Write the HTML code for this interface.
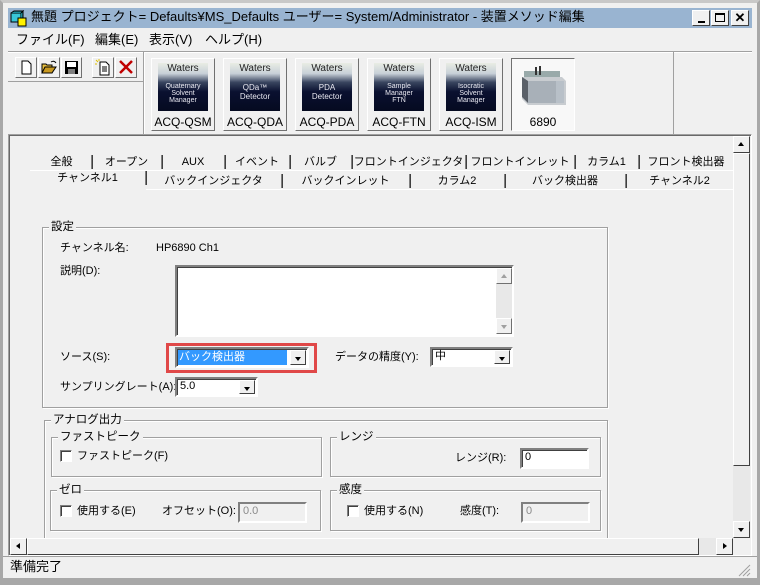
<!DOCTYPE html>
<html><head><meta charset="utf-8"><style>
*{box-sizing:border-box;margin:0;padding:0}
body{width:760px;height:585px;position:relative;overflow:hidden;background:#f0f0f0;font-family:"Liberation Sans","Noto Sans CJK JP",sans-serif;font-size:11px;color:#000}
.a{position:absolute}
.t{position:absolute;white-space:nowrap;line-height:14px}
.frame{left:0;top:0;width:760px;height:585px;border:3px solid #a8a8a8;border-top-color:#c8c8c8}
.raised{background:#f0f0f0;border:1px solid;border-color:#fff #707070 #707070 #fff}
.grp{position:absolute;border:1px solid #a0a0a0;box-shadow:1px 1px 0 #fff inset,1px 1px 0 #fff}
.gl{position:absolute;top:-8px;left:6px;background:#f0f0f0;padding:0 2px;white-space:nowrap;line-height:14px;font-size:11.5px}
.inp{position:absolute;background:#fff;border:2px solid;border-color:#808080 #fff #fff #808080;box-shadow:1px 1px 0 #404040 inset;line-height:15px;padding-left:3px}
.dis{background:#f0f0f0;color:#8a8a8a}
.dd{position:absolute;right:1px;top:1px;width:16px;bottom:1px;background:#f0f0f0;border:1px solid;border-color:#fff #404040 #404040 #fff}
.dd:after{content:"";position:absolute;left:4px;top:6px;border:3.5px solid transparent;border-top:4px solid #000}
.cb{position:absolute;width:12px;height:12px;background:#fff;border:1px solid;border-color:#808080 #fff #fff #808080;box-shadow:1px 1px 0 #404040 inset}
.dev{position:absolute;top:58px;width:64px;height:73px;border:1px solid;border-color:#fff #707070 #707070 #fff;text-align:center}
.logo{position:absolute;left:6px;top:4px;width:50px;height:48px;background:linear-gradient(#e8ece4 0,#c8d0d8 22%,#3a4660 40%,#0a1030 60%,#050a20 100%);color:#e8e8f0;font-size:7px;line-height:7px}
.logo b{display:block;color:#222;font-size:10px;font-weight:normal;padding-top:2px;height:20px}
.dl{position:absolute;left:0;right:0;top:56px;font-size:12px}
.tab{position:absolute;text-align:center;border-right:1px solid #808080;line-height:14px;box-shadow:1px 0 0 #404040;white-space:nowrap;overflow:hidden}
</style></head><body>
<div class="a frame"></div>
<div class="a" style="left:8px;top:8px;width:744px;height:20px;background:#99b4d1"></div>
<svg class="a" style="left:10px;top:10px" width="18" height="17"><rect x="1" y="3" width="10" height="9" fill="#39c6d6" stroke="#000"/><path d="M1 3l3-2h9l-2 2M11 3l2-2v9l-2 2" fill="#1c8a98" stroke="#000"/><rect x="8" y="8" width="8" height="8" fill="#fff200" stroke="#000"/></svg>
<div class="t" style="left:31px;top:10px;font-size:13px">無題 プロジェクト= Defaults¥MS_Defaults ユーザー= System/Administrator - 装置メソッド編集</div>
<div class="a raised" style="left:692px;top:10px;width:18px;height:16px;border-color:#fff #404040 #404040 #fff"><div class="a" style="left:5px;top:10px;width:7px;height:2px;background:#000"></div></div>
<div class="a raised" style="left:711px;top:10px;width:18px;height:16px;border-color:#fff #404040 #404040 #fff"><div class="a" style="left:3px;top:2px;width:10px;height:9px;border:1px solid #000;border-top-width:2px"></div></div>
<div class="a raised" style="left:731px;top:10px;width:18px;height:16px;border-color:#fff #404040 #404040 #fff;font-weight:bold;font-size:13px;text-align:center;line-height:14px">✕</div>
<div class="t" style="left:16px;top:33px;font-size:13px">ファイル(F)</div>
<div class="t" style="left:95px;top:33px;font-size:13px">編集(E)</div>
<div class="t" style="left:149px;top:33px;font-size:13px">表示(V)</div>
<div class="t" style="left:205px;top:33px;font-size:13px">ヘルプ(H)</div>
<div class="a" style="left:8px;top:51px;width:744px;height:1px;background:#a0a0a0"></div>
<div class="a" style="left:8px;top:52px;width:744px;height:1px;background:#fff"></div>
<div class="a raised" style="left:15px;top:57px;width:22px;height:21px"><svg width="20" height="19"><path d="M6 3h6l3 3v10H6z" fill="#fff" stroke="#000"/></svg></div>
<div class="a raised" style="left:38px;top:57px;width:22px;height:21px"><svg width="20" height="19"><path d="M3 6h4l1 1h5v8H3z" fill="#e8c040" stroke="#000"/><path d="M3 15l3-6h11l-4 6z" fill="#c89820" stroke="#000"/><path d="M12 4q3-2 5 1" stroke="#000" fill="none"/></svg></div>
<div class="a raised" style="left:61px;top:57px;width:21px;height:21px"><svg width="19" height="19"><rect x="3" y="3" width="13" height="13" fill="#000"/><rect x="5" y="4" width="9" height="5" fill="#fff"/><rect x="6" y="11" width="7" height="5" fill="#808080"/></svg></div>
<div class="a raised" style="left:92px;top:57px;width:22px;height:21px"><svg width="20" height="19"><path d="M7 4h6l3 3v10H7z" fill="#fff" stroke="#000"/><path d="M9 9h5M9 11h5M9 13h5" stroke="#000"/><path d="M3 2l2 2M6 1v2M2 6h2" stroke="#e0c000"/></svg></div>
<div class="a raised" style="left:115px;top:57px;width:22px;height:21px"><svg width="20" height="19"><path d="M4 3l12 12M16 3L4 15" stroke="#c00000" stroke-width="2.5"/></svg></div>
<div class="a" style="left:8px;top:81px;width:135px;height:1px;background:#a0a0a0"></div>
<div class="a" style="left:143px;top:52px;width:1px;height:82px;background:#a0a0a0"></div>
<div class="a" style="left:144px;top:52px;width:1px;height:82px;background:#fff"></div>
<div class="a" style="left:673px;top:52px;width:1px;height:82px;background:#a0a0a0"></div>
<div class="dev" style="left:151px"><div class="logo"><b>Waters</b>Quaternary<br>Solvent<br>Manager</div><div class="dl">ACQ-QSM</div></div>
<div class="dev" style="left:223px"><div class="logo"><b>Waters</b><span style="font-size:8px;line-height:9px">QDa™<br>Detector</span></div><div class="dl">ACQ-QDA</div></div>
<div class="dev" style="left:295px"><div class="logo"><b>Waters</b><span style="font-size:8px;line-height:9px">PDA<br>Detector</span></div><div class="dl">ACQ-PDA</div></div>
<div class="dev" style="left:367px"><div class="logo"><b>Waters</b>Sample<br>Manager<br>FTN</div><div class="dl">ACQ-FTN</div></div>
<div class="dev" style="left:439px"><div class="logo"><b>Waters</b>Isocratic<br>Solvent<br>Manager</div><div class="dl">ACQ-ISM</div></div>
<div class="dev" style="left:511px;border-color:#707070 #fff #fff #707070;background:#f8f8f8"><svg class="a" style="left:6px;top:4px" width="52" height="48"><path d="M6 8h36v6H6z" fill="#9aa"/><path d="M4 14h40l4 4v24H10l-6-6z" fill="#c8ccd0"/><path d="M10 18h28v22H10z" fill="#a8b0b8"/><path d="M4 14l6 4v22l-6-6z" fill="#5a6068"/><path d="M38 18h8v22h-8z" fill="#b8c0c8"/><path d="M18 4v8M22 3v9" stroke="#333" stroke-width="2"/></svg><div class="dl">6890</div></div>
<div class="a" style="left:8px;top:134px;width:744px;height:422px;border:1px solid;border-color:#a0a0a0 #fff #fff #a0a0a0;box-shadow:1px 1px 0 #696969 inset"></div>
<div class="a" style="left:733px;top:136px;width:17px;height:402px;background:#e8e8e8"></div>
<div class="a raised" style="left:733px;top:136px;width:17px;height:17px;border-color:#fff #404040 #404040 #fff"><div class="a" style="left:4px;top:5px;border:3.5px solid transparent;border-bottom:4px solid #000;border-top:0"></div></div>
<div class="a raised" style="left:733px;top:153px;width:17px;height:313px;border-color:#fff #404040 #404040 #fff"></div>
<div class="a raised" style="left:733px;top:521px;width:17px;height:17px;border-color:#fff #404040 #404040 #fff"><div class="a" style="left:4px;top:6px;border:3.5px solid transparent;border-top:4px solid #000;border-bottom:0"></div></div>
<div class="a" style="left:10px;top:538px;width:723px;height:17px;background:#e8e8e8"></div>
<div class="a raised" style="left:10px;top:538px;width:17px;height:17px;border-color:#fff #404040 #404040 #fff"><div class="a" style="left:5px;top:4px;border:3.5px solid transparent;border-right:4px solid #000;border-left:0"></div></div>
<div class="a raised" style="left:27px;top:538px;width:672px;height:17px;border-color:#fff #404040 #404040 #fff"></div>
<div class="a raised" style="left:716px;top:538px;width:17px;height:17px;border-color:#fff #404040 #404040 #fff"><div class="a" style="left:6px;top:4px;border:3.5px solid transparent;border-left:4px solid #000;border-right:0"></div></div>
<div class="a" style="left:30px;top:170px;width:703px;height:1px;background:#fff"></div>
<div class="a" style="left:30px;top:189px;width:703px;height:1px;background:#fff"></div>
<div class="tab" style="left:32px;top:155px;width:60px">全般</div>
<div class="tab" style="left:92px;top:155px;width:70px">オープン</div>
<div class="tab" style="left:162px;top:155px;width:63px">AUX</div>
<div class="tab" style="left:225px;top:155px;width:65px">イベント</div>
<div class="tab" style="left:290px;top:155px;width:62px">バルブ</div>
<div class="tab" style="left:352px;top:155px;width:114px">フロントインジェクタ</div>
<div class="tab" style="left:466px;top:155px;width:109px">フロントインレット</div>
<div class="tab" style="left:575px;top:155px;width:64px">カラム1</div>
<div class="tab" style="left:639px;top:155px;width:94px;border-right:0;box-shadow:none">フロント検出器</div>
<div class="tab" style="left:30px;top:171px;width:116px">チャンネル1</div>
<div class="tab" style="left:146px;top:174px;width:136px">バックインジェクタ</div>
<div class="tab" style="left:282px;top:174px;width:128px">バックインレット</div>
<div class="tab" style="left:410px;top:174px;width:95px">カラム2</div>
<div class="tab" style="left:505px;top:174px;width:121px">バック検出器</div>
<div class="tab" style="left:626px;top:174px;width:107px;border-right:0;box-shadow:none">チャンネル2</div>
<div class="a" style="left:30px;top:189px;width:116px;height:2px;background:#f0f0f0"></div>
<div class="grp" style="left:42px;top:227px;width:566px;height:181px"><div class="gl">設定</div></div>
<div class="t" style="left:60px;top:241px">チャンネル名:</div>
<div class="t" style="left:156px;top:241px">HP6890 Ch1</div>
<div class="t" style="left:60px;top:264px">説明(D):</div>
<div class="inp" style="left:175px;top:265px;width:339px;height:72px"></div>
<div class="a" style="left:496px;top:268px;width:16px;height:66px;background:#e8e8e8"></div>
<div class="a raised" style="left:496px;top:268px;width:16px;height:16px"><div class="a" style="left:4px;top:5px;border:3.5px solid transparent;border-bottom:4px solid #a0a0a0;border-top:0"></div></div>
<div class="a raised" style="left:496px;top:318px;width:16px;height:16px"><div class="a" style="left:4px;top:6px;border:3.5px solid transparent;border-top:4px solid #a0a0a0;border-bottom:0"></div></div>
<div class="t" style="left:60px;top:350px">ソース(S):</div>
<div class="a" style="left:166px;top:343px;width:151px;height:30px;border:3px solid #e04848"></div>
<div class="inp" style="left:175px;top:347px;width:134px;height:21px"><div class="a" style="left:1px;top:1px;width:109px;height:15px;background:#3399ff;color:#fff;padding-left:1px">バック検出器</div><div class="dd"></div></div>
<div class="t" style="left:335px;top:350px">データの精度(Y):</div>
<div class="inp" style="left:430px;top:347px;width:83px;height:20px">中<div class="dd"></div></div>
<div class="t" style="left:60px;top:380px">サンプリングレート(A):</div>
<div class="inp" style="left:175px;top:377px;width:83px;height:20px">5.0<div class="dd"></div></div>
<div class="grp" style="left:44px;top:420px;width:564px;height:118px;border-bottom:0"><div class="gl">アナログ出力</div></div>
<div class="grp" style="left:51px;top:437px;width:271px;height:40px"><div class="gl">ファストピーク</div></div>
<div class="cb" style="left:60px;top:450px"></div>
<div class="t" style="left:77px;top:449px">ファストピーク(F)</div>
<div class="grp" style="left:330px;top:437px;width:271px;height:40px"><div class="gl">レンジ</div></div>
<div class="t" style="left:455px;top:451px">レンジ(R):</div>
<div class="inp" style="left:520px;top:448px;width:69px;height:21px">0</div>
<div class="grp" style="left:50px;top:490px;width:271px;height:41px"><div class="gl">ゼロ</div></div>
<div class="cb" style="left:60px;top:505px"></div>
<div class="t" style="left:77px;top:504px">使用する(E)</div>
<div class="t" style="left:162px;top:504px">オフセット(O):</div>
<div class="inp dis" style="left:238px;top:502px;width:69px;height:21px;box-shadow:none">0.0</div>
<div class="grp" style="left:330px;top:490px;width:271px;height:41px"><div class="gl">感度</div></div>
<div class="cb" style="left:347px;top:505px"></div>
<div class="t" style="left:364px;top:504px">使用する(N)</div>
<div class="t" style="left:460px;top:504px">感度(T):</div>
<div class="inp dis" style="left:521px;top:502px;width:69px;height:21px;box-shadow:none">0</div>
<div class="a" style="left:3px;top:556px;width:754px;height:1px;background:#a0a0a0"></div>
<div class="t" style="left:10px;top:560px;font-size:13px">準備完了</div>
<svg class="a" style="left:737px;top:563px" width="14" height="14"><path d="M13 2L2 13M13 6L6 13M13 10L10 13" stroke="#a0a0a0"/></svg>
<div class="a" style="left:0;top:578px;width:760px;height:7px;background:#a8a8a8"></div>
</body></html>
